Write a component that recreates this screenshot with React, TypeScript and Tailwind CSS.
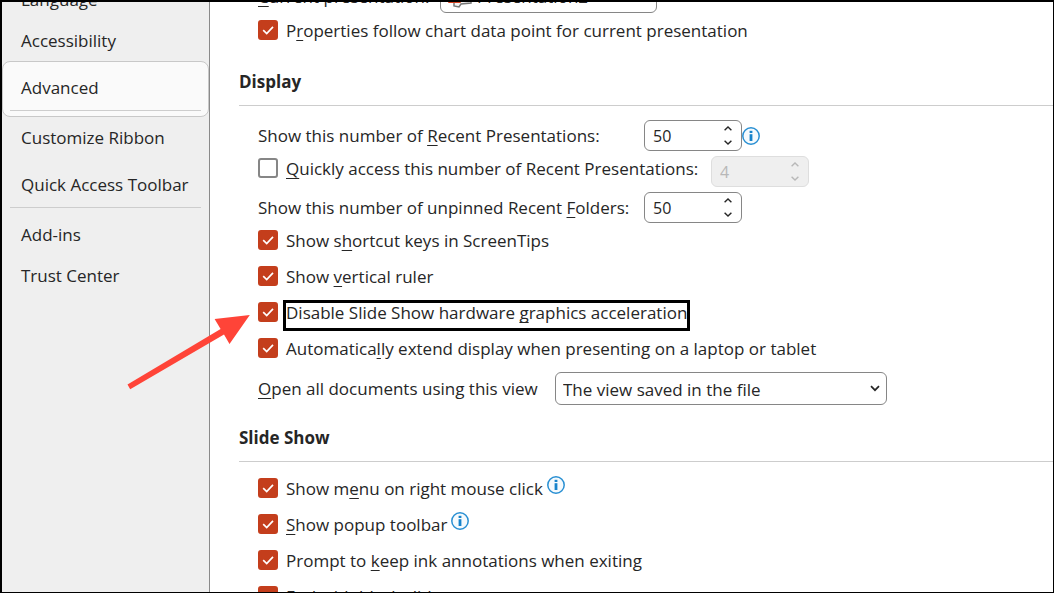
import { useId, useState, type ReactNode } from "react";

function Key({ children }: { children: ReactNode }) {
  return (
    <span className="underline decoration-1 underline-offset-3 [text-decoration-skip-ink:none]">
      {children}
    </span>
  );
}

function InfoButton({ label }: { label: string }) {
  return (
    <button type="button" aria-label={label} className="shrink-0">
      <svg width="18" height="18" viewBox="0 0 18 18">
        <circle cx="9" cy="9" r="8.2" fill="#f5fafd" stroke="#2a90d3" strokeWidth="1.5" />
        <rect x="7.6" y="3.8" width="2.8" height="2.2" fill="#1683cb" />
        <rect x="7.6" y="7.2" width="2.8" height="6.8" fill="#1683cb" />
      </svg>
    </button>
  );
}

function CheckBox({ id, checked = false }: { id: string; checked?: boolean }) {
  return (
    <span className="relative flex size-5 shrink-0">
      <input
        id={id}
        type="checkbox"
        defaultChecked={checked}
        className="peer size-5 appearance-none rounded-[3px] border-2 border-[#868686] bg-white checked:border-[#c43e1c] checked:bg-[#c43e1c]"
      />
      <svg
        viewBox="0 0 20 20"
        className="pointer-events-none absolute inset-0 hidden size-5 peer-checked:block"
      >
        <path d="M5.2 10.2 8.7 13.5 15 6.9" fill="none" stroke="#fff" strokeWidth="1.7" />
      </svg>
    </span>
  );
}

function CheckRow({ children, info, extra }: { children: ReactNode; info?: string; extra?: ReactNode }) {
  const id = useId();
  return (
    <div className="relative flex h-5 items-center gap-2">
      <CheckBox id={id} checked />
      <label htmlFor={id} className="relative mt-0.5 whitespace-nowrap">
        {children}
      </label>
      {info && (
        <span className="-ml-1 flex pb-1.5">
          <InfoButton label={info} />
        </span>
      )}
      {extra}
    </div>
  );
}

function Spinner({ id, initial, disabled = false }: { id: string; initial: number; disabled?: boolean }) {
  const [value, setValue] = useState(initial);
  return (
    <div
      className={
        disabled
          ? "flex h-[31px] w-[98px] shrink-0 rounded-md border border-[#dedede] bg-[#efefef] text-[#b8b8b8]"
          : "flex h-[31px] w-[98px] shrink-0 rounded-md border border-[#868686] bg-white text-[#262626]"
      }
    >
      <input
        id={id}
        type="text"
        inputMode="numeric"
        aria-label={disabled ? "Number of quick access presentations" : undefined}
        value={value}
        disabled={disabled}
        onChange={(e) => setValue(Number(e.target.value) || 0)}
        className="w-full min-w-0 bg-transparent pl-2 text-base outline-none"
      />
      <div className="flex w-[26px] shrink-0 flex-col">
        <button
          type="button"
          aria-label="Increase"
          disabled={disabled}
          onClick={() => setValue(value + 1)}
          className="flex flex-1 items-center justify-center"
        >
          <svg width="8" height="5" viewBox="0 0 8 5">
            <path d="M.6 4.3 4 1l3.4 3.3" fill="none" stroke="currentColor" strokeWidth="1.4" />
          </svg>
        </button>
        <button
          type="button"
          aria-label="Decrease"
          disabled={disabled}
          onClick={() => setValue(Math.max(0, value - 1))}
          className="flex flex-1 items-center justify-center"
        >
          <svg width="8" height="5" viewBox="0 0 8 5">
            <path d="M.6.7 4 4 7.4.7" fill="none" stroke="currentColor" strokeWidth="1.4" />
          </svg>
        </button>
      </div>
    </div>
  );
}

function Heading({ children, className }: { children: ReactNode; className: string }) {
  return (
    <h2 className={`border-b border-[#cdcdcd] pb-[11px] text-[17px] leading-6 font-bold ${className}`}>
      {children}
    </h2>
  );
}

function NavItem({ children, selected = false, last = false }: { children: string; selected?: boolean; last?: boolean }) {
  if (!last) {
    return (
      <button type="button" className="flex h-[41px] w-full items-center pl-[19px] text-left">
        {children}
      </button>
    );
  }
  return (
    <div
      className={
        selected
          ? "rounded-lg border border-[#c8c8c8] bg-[#fafafa] py-[5px]"
          : "border border-transparent py-[5px]"
      }
    >
      <button
        type="button"
        aria-current={selected ? "page" : undefined}
        className="flex h-[41px] w-full items-center pl-[18px] text-left"
      >
        {children}
      </button>
      <div className="mx-[7px] mt-0.5 border-t border-[#cdcdcd]" />
    </div>
  );
}

function Arrow() {
  return (
    <svg
      aria-hidden="true"
      width="124"
      height="80"
      viewBox="126 310 124 80"
      className="pointer-events-none absolute top-2 -left-[132px]"
    >
      <path d="M127.5 384.5 220.6 329 214.6 319 249.8 315 229.5 344 224 334.5 130.2 389.2Z" fill="#ff4438" />
    </svg>
  );
}

export default function App() {
  return (
    <div className="flex h-screen overflow-hidden border-t-2 border-r border-b border-l-2 border-black bg-white font-['Open_Sans','Noto_Sans',sans-serif] text-[17px] leading-6 text-[#262626]">
      <aside className="w-52 shrink-0 border-r border-[#8a8a8a] bg-[#efefef]">
        <nav className="-mt-[23px] flex flex-col">
          <NavItem>Language</NavItem>
          <NavItem>Accessibility</NavItem>
          <NavItem selected last>Advanced</NavItem>
          <NavItem>Customize Ribbon</NavItem>
          <NavItem last>Quick Access Toolbar</NavItem>
          <NavItem>Add-ins</NavItem>
          <NavItem>Trust Center</NavItem>
        </nav>
      </aside>

      <main className="min-w-0 flex-1 pl-[29px]">
        <section className="-mt-[22px] flex flex-col gap-[7px] pl-[19px]">
          <div className="flex h-[33px] items-center">
            <label htmlFor="current" className="w-[182px] shrink-0">
              <Key>C</Key>urrent presentation:
            </label>
            <div className="relative w-[217px]">
              <select id="current" className="h-[33px] w-full appearance-none rounded-md border border-[#868686] bg-white pl-9">
                <option>Presentation2</option>
              </select>
              <svg width="30" height="28" viewBox="0 0 30 28" className="pointer-events-none absolute top-0 left-1">
                <path d="M9 6h18v17l-10 1-2 3-5-1V6Z" fill="#f4f4f4" stroke="#777" strokeWidth="1.5" />
                <rect x="4" y="8" width="13" height="15" rx="1" fill="#d9411e" />
              </svg>
            </div>
          </div>
          <CheckRow>
            P<Key>r</Key>operties follow chart data point for current presentation
          </CheckRow>
        </section>

        <section>
          <Heading className="pt-[30px]">Display</Heading>
          <div className="flex flex-col gap-[5px] pt-3.5 pl-[19px]">
            <div className="flex items-center">
              <label htmlFor="recent" className="w-[386px] shrink-0">
                Show this number of <Key>R</Key>ecent Presentations:
              </label>
              <Spinner id="recent" initial={50} />
              <InfoButton label="About recent presentations" />
            </div>
            <div className="flex items-start gap-2">
              <span className="pt-0.5">
                <CheckBox id="quick" />
              </span>
              <label htmlFor="quick" className="w-[417px] shrink-0 pt-px">
                <Key>Q</Key>uickly access this number of Recent Presentations:
              </label>
              <Spinner id="quick-count" initial={4} disabled />
            </div>
            <div className="flex items-center">
              <label htmlFor="folders" className="w-[386px] shrink-0">
                Show this number of unpinned Recent <Key>F</Key>olders:
              </label>
              <Spinner id="folders" initial={50} />
            </div>
          </div>

          <div className="flex flex-col gap-4 pt-[7px] pl-[19px]">
            <CheckRow>
              Show s<Key>h</Key>ortcut keys in ScreenTips
            </CheckRow>
            <CheckRow>
              Show <Key>v</Key>ertical ruler
            </CheckRow>
            <CheckRow extra={<Arrow />}>
              Disable Slide Show hardware <Key>g</Key>raphics acceleration
              <span className="pointer-events-none absolute -inset-x-[3px] -top-px -bottom-1.5 border-3 border-black" />
            </CheckRow>
            <CheckRow>
              Automatica<Key>l</Key>ly extend display when presenting on a laptop or tablet
            </CheckRow>
          </div>

          <div className="flex items-center pt-3.5 pl-[19px]">
            <label htmlFor="view" className="w-[297px] shrink-0">
              <Key>O</Key>pen all documents using this view
            </label>
            <div className="relative w-[332px]">
              <select id="view" className="block h-[33px] w-full appearance-none rounded-md border border-[#868686] bg-white pt-0.5 pl-[7px]">
                <option>The view saved in the file</option>
              </select>
              <svg width="10" height="7" viewBox="0 0 10 7" className="pointer-events-none absolute top-[13px] right-[7px]">
                <path d="M1 1.2 5 5.2 9 1.2" fill="none" stroke="#262626" strokeWidth="1.7" />
              </svg>
            </div>
          </div>
        </section>

        <section>
          <Heading className="pt-[21px]">Slide Show</Heading>
          <div className="flex flex-col gap-4 pt-4 pl-[19px]">
            <CheckRow info="About the right-click menu">
              Show m<Key>e</Key>nu on right mouse click
            </CheckRow>
            <CheckRow info="About the popup toolbar">
              <Key>S</Key>how popup toolbar
            </CheckRow>
            <CheckRow>
              Prompt to <Key>k</Key>eep ink annotations when exiting
            </CheckRow>
            <CheckRow>End with black slide</CheckRow>
          </div>
        </section>
      </main>
    </div>
  );
}
